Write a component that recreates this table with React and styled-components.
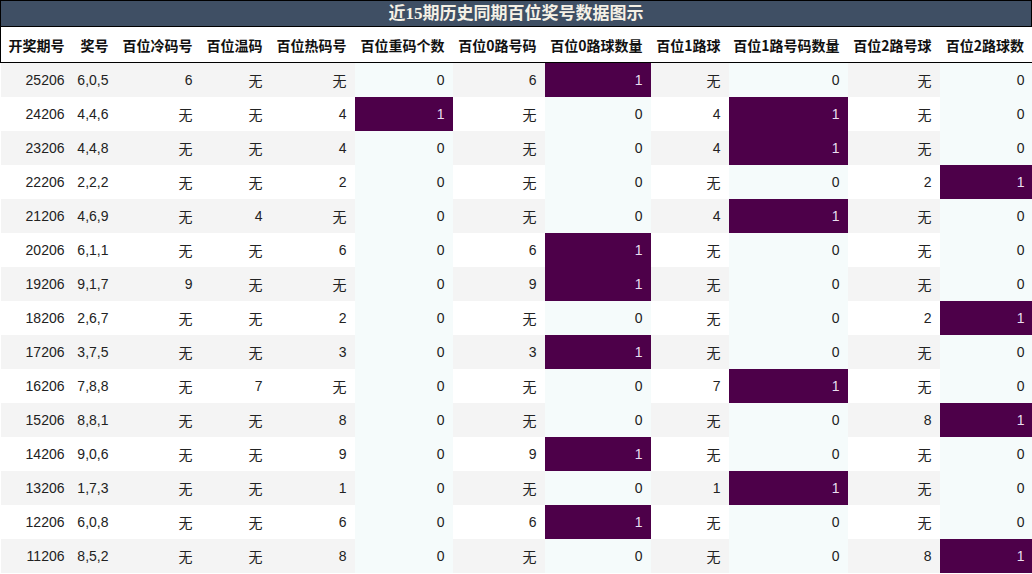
import styled, { createGlobalStyle } from "styled-components";

const GlobalStyle = createGlobalStyle`
  body {
    margin: 0;
    background: #fff;
    font-family: "Liberation Sans", "Noto Sans CJK SC", sans-serif;
  }
`;

const Wrapper = styled.div`
  width: 1032px;
`;

const Title = styled.div`
  height: 25px;
  line-height: 25px;
  border: 1px solid #000;
  background: #3f4f64;
  color: #f5f1e6;
  text-align: center;
  font-family: "Liberation Serif", "Noto Sans CJK SC", serif;
  font-weight: bold;
  font-size: 17px;
`;

const Table = styled.table`
  width: 1032px;
  border-collapse: collapse;
  table-layout: fixed;
`;

const HeadCell = styled.th`
  height: 35px;
  padding: 0 8px 0 0;
  text-align: right;
  font-family: "Noto Sans CJK SC", sans-serif;
  font-weight: bold;
  font-size: 14px;
  color: #111;
  white-space: nowrap;
  border-bottom: 1px solid #000;
  &:first-child {
    border-left: 1px solid #000;
  }
  &:last-child {
    border-right: 1px solid #000;
  }
`;

const Row = styled.tr`
  background: ${(p) => (p.$stripe ? "#f4f4f4" : "#fff")};
`;

const Cell = styled.td`
  height: 34px;
  padding: 0 8px 0 0;
  text-align: right;
  font-size: 14px;
  color: ${(p) => (p.$hot ? "#eadff0" : "#222")};
  white-space: nowrap;
  background: ${(p) => (p.$hot ? "#4d0049" : p.$light ? "#f5fbfb" : "transparent")};
`;

const columns = [
  { title: "开奖期号", width: 72 },
  { title: "奖号", width: 44 },
  { title: "百位冷码号", width: 84 },
  { title: "百位温码", width: 70 },
  { title: "百位热码号", width: 84 },
  { title: "百位重码个数", width: 98, count: true },
  { title: "百位0路号码", width: 92 },
  { title: "百位0路球数量", width: 106, count: true },
  { title: "百位1路球", width: 78 },
  { title: "百位1路号码数量", width: 119, count: true },
  { title: "百位2路号球", width: 92 },
  { title: "百位2路球数", width: 93, count: true },
];

const rows = [
  ["25206", "6,0,5", "6", "无", "无", "0", "6", "1", "无", "0", "无", "0"],
  ["24206", "4,4,6", "无", "无", "4", "1", "无", "0", "4", "1", "无", "0"],
  ["23206", "4,4,8", "无", "无", "4", "0", "无", "0", "4", "1", "无", "0"],
  ["22206", "2,2,2", "无", "无", "2", "0", "无", "0", "无", "0", "2", "1"],
  ["21206", "4,6,9", "无", "4", "无", "0", "无", "0", "4", "1", "无", "0"],
  ["20206", "6,1,1", "无", "无", "6", "0", "6", "1", "无", "0", "无", "0"],
  ["19206", "9,1,7", "9", "无", "无", "0", "9", "1", "无", "0", "无", "0"],
  ["18206", "2,6,7", "无", "无", "2", "0", "无", "0", "无", "0", "2", "1"],
  ["17206", "3,7,5", "无", "无", "3", "0", "3", "1", "无", "0", "无", "0"],
  ["16206", "7,8,8", "无", "7", "无", "0", "无", "0", "7", "1", "无", "0"],
  ["15206", "8,8,1", "无", "无", "8", "0", "无", "0", "无", "0", "8", "1"],
  ["14206", "9,0,6", "无", "无", "9", "0", "9", "1", "无", "0", "无", "0"],
  ["13206", "1,7,3", "无", "无", "1", "0", "无", "0", "1", "1", "无", "0"],
  ["12206", "6,0,8", "无", "无", "6", "0", "6", "1", "无", "0", "无", "0"],
  ["11206", "8,5,2", "无", "无", "8", "0", "无", "0", "无", "0", "8", "1"],
];

const App = () => {
  return (
    <Wrapper>
      <GlobalStyle />
      <Title>近15期历史同期百位奖号数据图示</Title>
      <Table>
        <colgroup>
          {columns.map((c) => (
            <col key={c.title} style={{ width: c.width }} />
          ))}
        </colgroup>
        <thead>
          <tr>
            {columns.map((c) => (
              <HeadCell key={c.title}>{c.title}</HeadCell>
            ))}
          </tr>
        </thead>
        <tbody>
          {rows.map((r, i) => (
            <Row key={r[0]} $stripe={i % 2 === 0}>
              {r.map((v, j) => (
                <Cell
                  key={j}
                  $light={columns[j].count}
                  $hot={columns[j].count && v === "1"}
                >
                  {v}
                </Cell>
              ))}
            </Row>
          ))}
        </tbody>
      </Table>
    </Wrapper>
  );
};

export default App;
